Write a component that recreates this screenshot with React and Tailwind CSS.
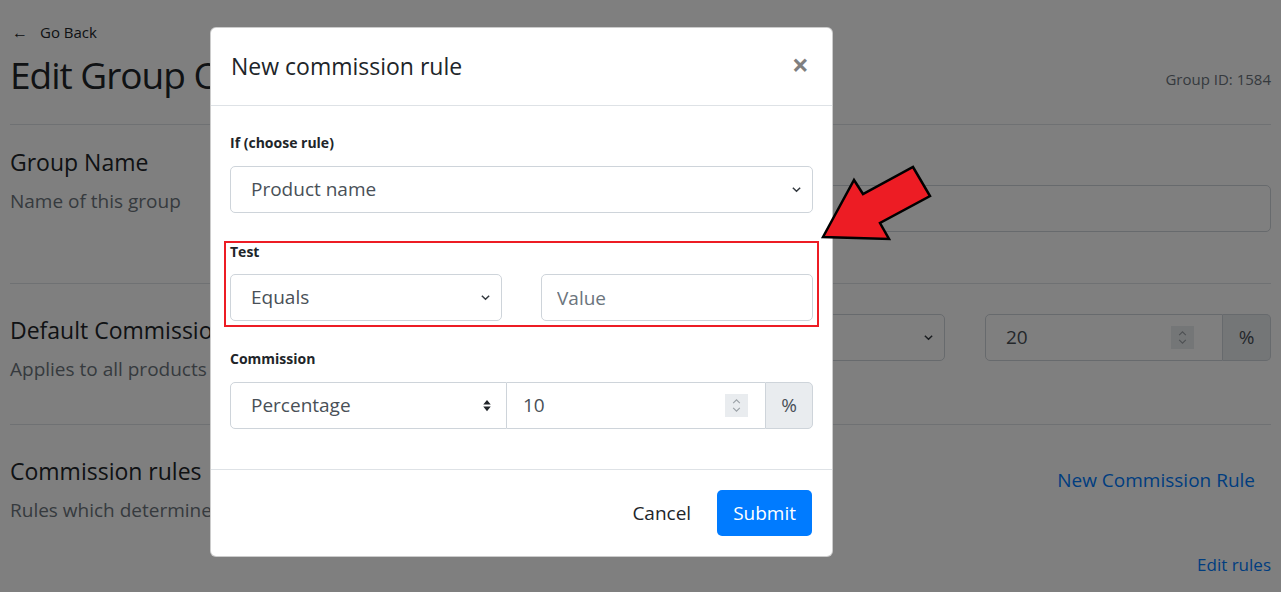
import { useState } from 'react'

const font = { fontFamily: '"Open Sans", "Noto Sans", sans-serif' }

const Chevron = ({ className = '' }) => (
  <svg viewBox="0 0 12 12" className={`w-[11px] h-[11px] ${className}`} fill="none" stroke="#343a40" strokeWidth="1.6">
    <path d="M2 4l4 4 4-4" />
  </svg>
)

const FakeSelect = ({ value, className = '' }) => (
  <div className={`h-[47px] flex items-center justify-between pl-[20px] pr-[10px] border border-[#ced4da] rounded-[5px] bg-white text-[19px] text-[#495057] ${className}`}>
    <span>{value}</span>
    <Chevron />
  </div>
)

const Spinner = () => (
  <div className="w-[23px] h-[23px] bg-[#e9ecef] flex flex-col items-center justify-center gap-[3px]">
    <svg viewBox="0 0 10 6" className="w-[9px] h-[5px]" fill="none" stroke="#9aa0a6" strokeWidth="1.3"><path d="M1 5l4-4 4 4" /></svg>
    <svg viewBox="0 0 10 6" className="w-[9px] h-[5px]" fill="none" stroke="#9aa0a6" strokeWidth="1.3"><path d="M1 1l4 4 4-4" /></svg>
  </div>
)

const SectionText = ({ title, sub }) => (
  <div className="w-[620px] shrink-0">
    <h3 className="text-[23px] text-[#212529] leading-[38px]">{title}</h3>
    <p className="text-[19px] text-[#6c757d] leading-[40px]">{sub}</p>
  </div>
)

const App = () => {
  const [value, setValue] = useState('')

  return (
    <div className="relative w-[1281px] h-[592px] overflow-hidden bg-white" style={font}>
      {/* page behind the modal */}
      <div className="px-[10px] pt-[21px]">
        <div className="flex items-center gap-[12px] text-[15px] leading-[22px] text-[#212529] pl-[2px]">
          <span className="text-[16px]">←</span>
          <span>Go Back</span>
        </div>
        <div className="flex items-start justify-between border-b border-[#dee2e6] pt-[6px] pb-[23px]">
          <h1 className="text-[37px] leading-[52px] tracking-[-1px] text-[#212529]">Edit Group One</h1>
          <span className="text-[15px] leading-[20px] text-[#6c757d] mt-[20px]">Group ID: 1584</span>
        </div>

        {/* group name */}
        <div className="flex items-start border-b border-[#dee2e6] pt-[18px] h-[159px]">
          <SectionText title="Group Name" sub="Name of this group" />
          <div className="flex-1 h-[47px] border border-[#ced4da] rounded-[5px] ml-[20px] mt-[42px]"></div>
        </div>

        {/* default commission */}
        <div className="flex items-start border-b border-[#dee2e6] pt-[27px] h-[141px]">
          <SectionText title="Default Commission" sub="Applies to all products" />
          <div className="flex-1 flex gap-[40px] ml-[20px] mt-[3px]">
            <FakeSelect value="Percentage" className="w-[295px]" />
            <div className="flex flex-1 h-[47px]">
              <div className="flex-1 flex items-center justify-between pl-[20px] pr-[28px] border border-[#ced4da] rounded-l-[5px] text-[19px] text-[#495057]">
                <span>20</span>
                <Spinner />
              </div>
              <div className="w-[48px] flex items-center justify-center bg-[#e9ecef] border border-l-0 border-[#ced4da] rounded-r-[5px] text-[19px] text-[#495057]">%</div>
            </div>
          </div>
        </div>

        {/* commission rules */}
        <div className="flex items-start pt-[27px]">
          <SectionText title="Commission rules" sub="Rules which determine commission" />
          <div className="flex-1 flex flex-col items-end">
            <a className="text-[19px] leading-[27px] text-[#007bff] mt-[15px] mr-[16px]">New Commission Rule</a>
            <a className="text-[17px] leading-[24px] text-[#007bff] mt-[59px]">Edit rules</a>
          </div>
        </div>
      </div>

      {/* backdrop */}
      <div className="absolute inset-0 bg-black/50"></div>

      {/* modal */}
      <div className="absolute left-[210px] top-[27px] w-[623px] bg-white rounded-[6px] border border-black/20">
        <div className="h-[78px] flex items-center justify-between px-[20px] border-b border-[#dee2e6]">
          <h5 className="text-[23px] text-[#212529]">New commission rule</h5>
          <button className="text-[30px] font-bold text-black/50 leading-none pr-[3px] -mt-[4px]">×</button>
        </div>
        <div className="px-[19px] pt-[26px] pb-[40px]">
          <label className="block text-[14px] font-bold text-[#212529] leading-[22px] mb-[12px]">If (choose rule)</label>
          <FakeSelect value="Product name" />

          <div className="mt-[28px]">
            <label className="block text-[14px] font-bold text-[#212529] leading-[22px] mb-[11px]">Test</label>
            <div className="grid grid-cols-2 gap-[39px]">
              <FakeSelect value="Equals" />
              <input
                value={value}
                onChange={(e) => setValue(e.target.value)}
                placeholder="Value"
                className="h-[47px] px-[15px] border border-[#ced4da] rounded-[5px] text-[19px] text-[#495057] placeholder:text-[#6c757d] outline-none"
                style={font}
              />
            </div>
          </div>

          <div className="mt-[27px]">
            <label className="block text-[14px] font-bold text-[#212529] leading-[22px] mb-[12px]">Commission</label>
            <div className="flex h-[47px]">
              <div className="w-[277px] flex items-center justify-between pl-[20px] pr-[14px] border border-[#ced4da] rounded-l-[5px] text-[19px] text-[#495057]">
                <span>Percentage</span>
                <svg viewBox="0 0 10 16" className="w-[10px] h-[15px]" fill="#212529">
                  <path d="M1 7l4-5 4 5z M1 9l4 5 4-5z" />
                </svg>
              </div>
              <div className="flex-1 flex items-center justify-between pl-[16px] pr-[17px] border-y border-[#ced4da] text-[19px] text-[#495057]">
                <span>10</span>
                <Spinner />
              </div>
              <div className="w-[48px] flex items-center justify-center bg-[#e9ecef] border border-[#ced4da] rounded-r-[5px] text-[19px] text-[#495057]">%</div>
            </div>
          </div>
        </div>
        <div className="flex items-center justify-end gap-[26px] px-[20px] py-[20px] border-t border-[#dee2e6]">
          <button className="text-[19px] text-[#212529]">Cancel</button>
          <button className="h-[46px] px-[16px] rounded-[5px] bg-[#007bff] text-white text-[19px]">Submit</button>
        </div>
      </div>

      {/* annotation: red box + arrow */}
      <div className="absolute left-[224px] top-[241px] w-[595px] h-[86px] border-2 border-[#ed1c24] pointer-events-none"></div>
      <svg className="absolute left-0 top-0 pointer-events-none" width="1281" height="592">
        <polygon
          points="823,237 854,180 863,194 913,167 930,196 880,223 889,239"
          fill="#ed1c24"
          stroke="#000"
          strokeWidth="2.5"
          strokeLinejoin="miter"
        />
      </svg>
    </div>
  )
}

export default App
